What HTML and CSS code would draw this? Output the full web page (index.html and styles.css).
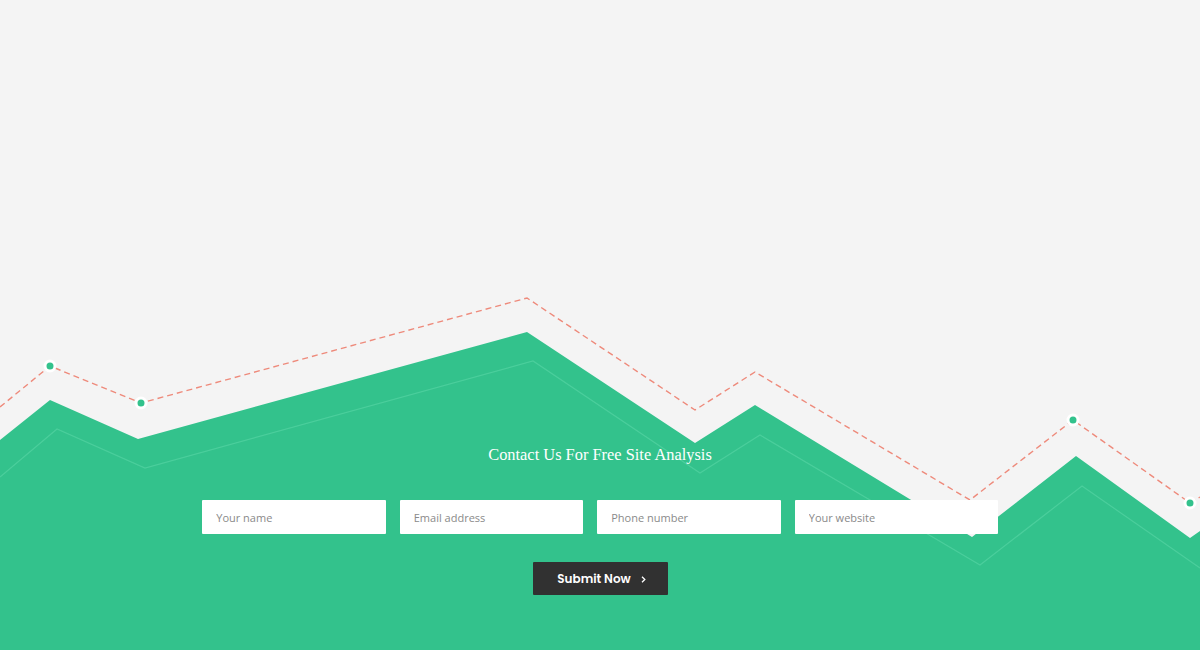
FILE: index.html
```html
<!DOCTYPE html>
<html lang="en">
<head>
<meta charset="utf-8">
<title>Contact Us For Free Site Analysis</title>
<link rel="stylesheet" href="styles.css">
</head>
<body>
<section class="hero">
  <svg class="chart" width="1200" height="650" viewBox="0 0 1200 650" aria-hidden="true">
    <polygon class="area" points="0,440 50,400 138,439 527,332 695,443 755,405 972,537 1076,456 1190,538 1200,531 1200,650 0,650"/>
    <polyline class="inner" points="0,477 57,429 145,468 533,361 700,473 760,435 980,565 1082,486 1200,568"/>
    <polyline class="dash" points="0,407 50,366 141,403 527,298 695,410 755,372 970,500 1073,420 1190,503 1200,497"/>
    <g class="dots">
      <circle cx="50" cy="366" r="5"/>
      <circle cx="141" cy="403" r="5"/>
      <circle cx="1073" cy="420" r="5"/>
      <circle cx="1190" cy="503" r="5"/>
    </g>
  </svg>
  <div class="contact">
    <h2 class="title">Contact Us For Free Site Analysis</h2>
    <form class="form">
      <div class="fields">
        <input class="field" type="text" placeholder="Your name">
        <input class="field" type="email" placeholder="Email address">
        <input class="field" type="tel" placeholder="Phone number">
        <input class="field field-wide" type="url" placeholder="Your website">
      </div>
      <button class="submit" type="button">Submit Now
        <svg class="chev" width="5" height="7" viewBox="0 0 5 7"><polyline points="1,0.8 3.8,3.5 1,6.2" fill="none" stroke="#fff" stroke-width="1.3"/></svg>
      </button>
    </form>
  </div>
</section>
</body>
</html>
```
FILE: styles.css
```css
* { box-sizing: border-box; }
html, body { margin: 0; padding: 0; }
body {
  background: #f4f4f4;
  font-family: "Open Sans", "Liberation Sans", sans-serif;
}
.hero {
  position: relative;
  width: 1200px;
  height: 650px;
  overflow: hidden;
}
.chart {
  position: absolute;
  left: 0;
  top: 0;
}
.area { fill: #33c28c; }
.inner { fill: none; stroke: #4fd09f; stroke-width: 1.2; opacity: 0.85; }
.dash {
  fill: none;
  stroke: #ee8a7b;
  stroke-width: 1.4;
  stroke-dasharray: 6 4;
}
.dots circle {
  fill: #33c28c;
  stroke: #fff;
  stroke-width: 3;
}
.contact {
  position: relative;
  display: flex;
  flex-direction: column;
  align-items: center;
  padding-top: 444px;
}
.title {
  margin: 0;
  font-family: "Liberation Serif", "Times New Roman", serif;
  font-weight: normal;
  font-size: 16.4px;
  line-height: 22px;
  color: #fff;
}
.form {
  display: flex;
  flex-direction: column;
  align-items: center;
  margin-top: 34px;
}
.fields {
  display: flex;
  gap: 14px;
}
.field {
  width: 183.5px;
  height: 34px;
  border: none;
  border-radius: 1px;
  background: #fff;
  padding: 0 14px;
  font-family: "Open Sans", sans-serif;
  font-size: 11px;
  color: #555;
  outline: none;
}
.field::placeholder { color: #8a8a8a; }
.field-wide { width: 203px; }
.submit {
  margin-top: 28px;
  width: 135px;
  height: 33px;
  border: none;
  border-radius: 1px;
  background: #313131;
  color: #fff;
  font-family: "Poppins", "Inter", "Roboto", sans-serif;
  font-weight: 600;
  font-size: 12px;
  display: flex;
  align-items: center;
  justify-content: center;
  gap: 10px;
  padding: 1px 0 0 3px;
}
.chev { display: block; }
```
